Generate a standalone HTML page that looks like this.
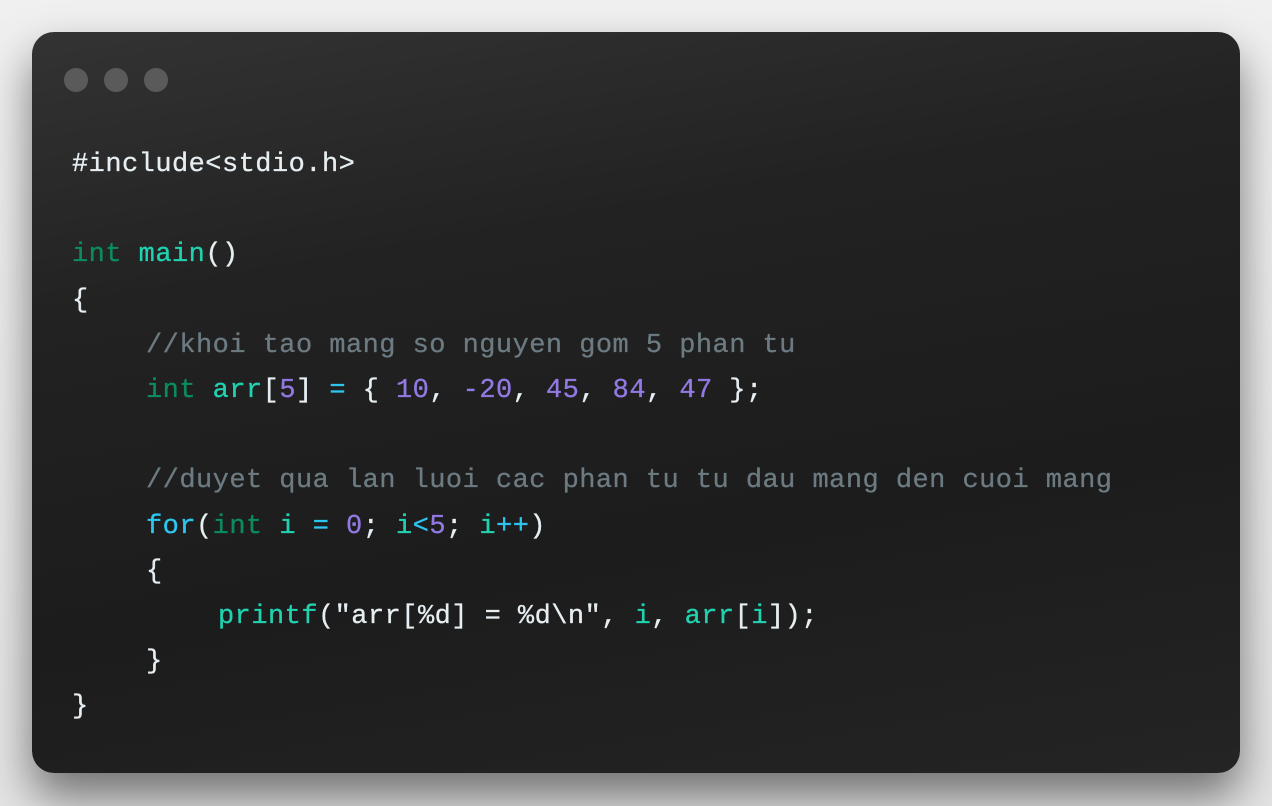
<!DOCTYPE html>
<html><head><meta charset="utf-8"><style>
html,body{margin:0;padding:0}
body{width:1272px;height:806px;background:linear-gradient(180deg,#f0f0f0,#e4e4e4);position:relative;overflow:hidden;font-family:"Liberation Mono",monospace}
.card{position:absolute;left:32px;top:32px;width:1208px;height:741px;border-radius:22px;
background:linear-gradient(170deg,#333333 0%,#222 30%,#1c1c1c 65%,#242424 100%);
box-shadow:0 24px 45px rgba(0,0,0,0.5)}
.dot{position:absolute;top:36px;width:24px;height:24px;border-radius:50%;background:#5a5a5a}
.code{position:absolute;left:40px;top:111px;font-size:27px;letter-spacing:0.46px;line-height:45.2px;color:#e6eef2;white-space:pre;-webkit-text-stroke:0.3px currentColor}
.l{height:45.2px}
.k{color:#0b8c5c}.f{color:#20d2b0}.n{color:#9379e3}.o{color:#2ec6f0}.c{color:#6c7b82}
</style></head><body>
<div class="card">
<div class="dot" style="left:32px"></div><div class="dot" style="left:72px"></div><div class="dot" style="left:112px"></div>
<div class="code"><div class="l">#include&lt;stdio.h&gt;</div><div class="l"></div><div class="l"><span class="k">int</span> <span class="f">main</span>()</div><div class="l">{</div><div class="l" style="padding-left:74px"><span class="c">//khoi tao mang so nguyen gom 5 phan tu</span></div><div class="l" style="padding-left:74px"><span class="k">int</span> <span class="f">arr</span>[<span class="n">5</span>] <span class="o">=</span> { <span class="n">10</span>, <span class="n">-20</span>, <span class="n">45</span>, <span class="n">84</span>, <span class="n">47</span> };</div><div class="l"></div><div class="l" style="padding-left:74px"><span class="c">//duyet qua lan luoi cac phan tu tu dau mang den cuoi mang</span></div><div class="l" style="padding-left:74px"><span class="o">for</span>(<span class="k">int</span> <span class="f">i</span> <span class="o">=</span> <span class="n">0</span>; <span class="f">i</span><span class="o">&lt;</span><span class="n">5</span>; <span class="f">i</span><span class="o">++</span>)</div><div class="l" style="padding-left:74px">{</div><div class="l" style="padding-left:146px"><span class="f">printf</span>("arr[%d] = %d\n", <span class="f">i</span>, <span class="f">arr</span>[<span class="f">i</span>]);</div><div class="l" style="padding-left:74px">}</div><div class="l">}</div></div>
</div>
</body></html>
